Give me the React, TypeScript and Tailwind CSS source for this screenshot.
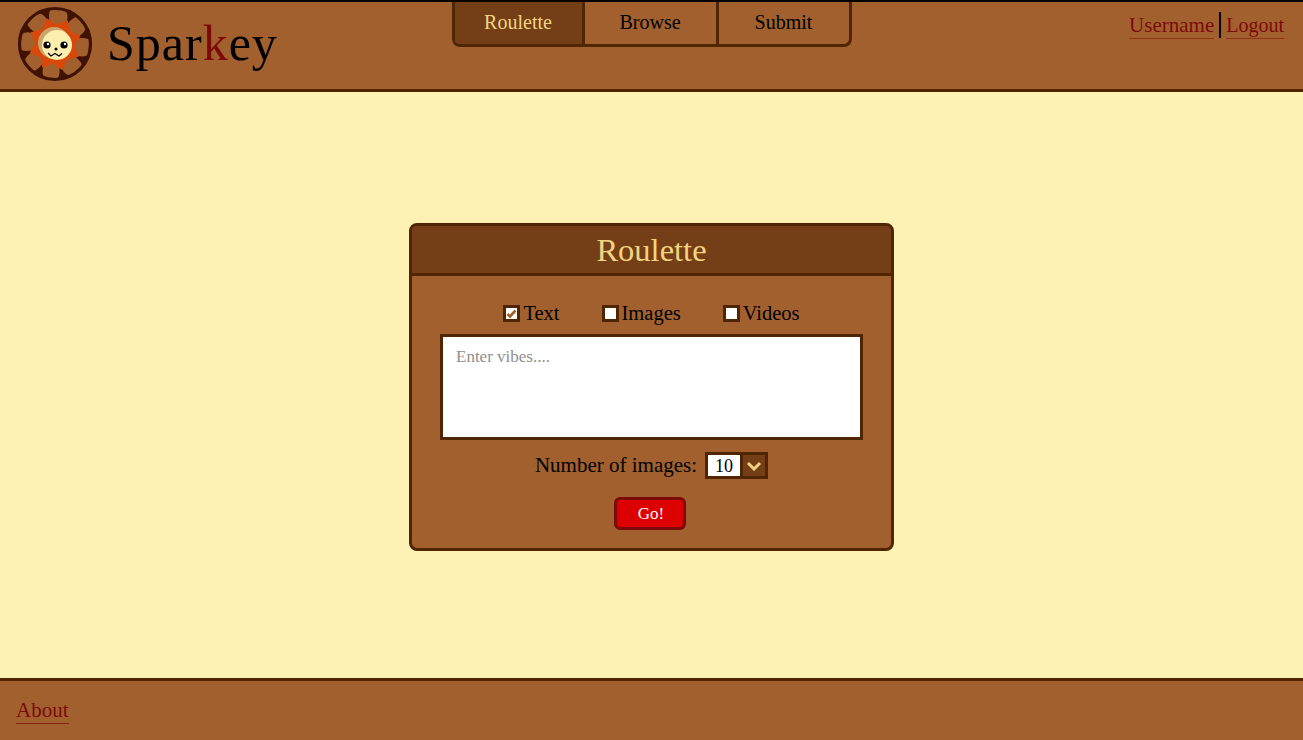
const serif = "font-['Liberation_Serif',serif]";

// ─── Logo ─────────────────────────────────────────────────────────────────────
const pt = (r: number, deg: number) => {
  const a = ((deg - 90) * Math.PI) / 180;
  return `${(38 + r * Math.cos(a)).toFixed(1)} ${(38 + r * Math.sin(a)).toFixed(1)}`;
};

const tips = [-18, 28, 72, 118, 165, 208, 250, 296];

function Logo() {
  const star = tips
    .map((d, i) => {
      const next = tips[(i + 1) % tips.length] + (i === tips.length - 1 ? 360 : 0);
      return `${i === 0 ? "M" : "L"}${pt(27, d)} L${pt(19.5, (d + next) / 2)}`;
    })
    .join(" ");
  return (
    <svg width="76" height="76" viewBox="0 0 76 76" className="shrink-0">
      <circle cx="38" cy="38" r="35.5" fill="#a2602e" stroke="#3f1204" strokeWidth="3.2" />
      {tips.map((d) => (
        <path
          key={d}
          d={`M${pt(20, d)} Q${pt(31, d + 1)} ${pt(35, d - 10)} L${pt(35, d + 11)} Q${pt(31, d + 4)} ${pt(20, d + 4)} Z`}
          fill="#3f1204"
        />
      ))}
      <path d={`${star} Z`} fill="#d9480b" />
      <circle cx="37" cy="37" r="16" fill="#c9a56c" />
      <circle cx="40" cy="39" r="15" fill="#fdeeb0" />
      <circle cx="30" cy="39" r="3.6" fill="#000" />
      <circle cx="31" cy="38" r="1.2" fill="#fff" />
      <circle cx="47" cy="39" r="3.6" fill="#000" />
      <circle cx="48" cy="38" r="1.2" fill="#fff" />
      <circle cx="39" cy="43" r="1.5" fill="#000" />
      <path d="M31 47 L34 50 L38 47.5 L42 50 L45 47.5" fill="none" stroke="#000" strokeWidth="1.3" />
    </svg>
  );
}

// ─── Checkbox row item ────────────────────────────────────────────────────────
function Check({ label, checked }: { label: string; checked?: boolean }) {
  return (
    <label className="flex items-center gap-[3px]">
      <span className="flex h-[17px] w-[17px] items-center justify-center border-[3px] border-[#4f2502] bg-white">
        {checked && (
          <svg width="11" height="11" viewBox="0 0 11 11">
            <path d="M1.5 6 L4 8.5 L9.5 2.5" fill="none" stroke="#a2602e" strokeWidth="2.6" />
          </svg>
        )}
      </span>
      <span className="text-[20.5px] leading-none text-black">{label}</span>
    </label>
  );
}

const tabs = ["Roulette", "Browse", "Submit"];

export default function App() {
  return (
    <div className={`flex h-screen flex-col bg-[#fdf1b3] ${serif}`}>
      {/* Header */}
      <header className="grid h-[92px] grid-cols-[1fr_auto_1fr] border-t-2 border-b-[3px] border-t-black border-b-[#4f2502] bg-[#a2602e]">
        <div className="flex items-start pl-[17px] pt-[4px]">
          <Logo />
          <span className="ml-[14px] mt-[5px] text-[50px] leading-[64px] tracking-[1px] text-black">
            Spar<span className="text-[#7d0a0a]">k</span>ey
          </span>
        </div>

        <nav className="flex h-[45px] w-[400px] overflow-hidden rounded-b-[8px] border-x-[3px] border-b-[3px] border-[#4f2502]">
          {tabs.map((t, i) => (
            <div
              key={t}
              className={
                i === 0
                  ? "flex w-[130px] items-center justify-center border-r-[3px] border-[#4f2502] bg-[#743f16] pb-[2px] text-[20px] text-[#f3d382]"
                  : i === 1
                    ? "flex w-[134px] items-center justify-center border-r-[3px] border-[#4f2502] pb-[2px] text-[20px] text-black"
                    : "flex flex-1 items-center justify-center pb-[2px] text-[20px] text-black"
              }
            >
              {t}
            </div>
          ))}
        </nav>

        <div className="flex items-start justify-end pr-[19px] pt-[10px] leading-[26px] text-[#7d0a0a]">
          <a className="border-b border-[#7d0a0a]/50 text-[21px]">Username</a>
          <span className="mx-[5px] h-[26px] w-[2px] bg-black" />
          <a className="border-b border-[#7d0a0a]/50 text-[20px]">Logout</a>
        </div>
      </header>

      {/* Main */}
      <main className="flex flex-1 items-center justify-center pt-[4px]">
        <section className="w-[485px] overflow-hidden rounded-[8px] border-[3px] border-[#4f2502] bg-[#a2602e]">
          <h1 className="flex h-[50px] items-center justify-center border-b-[3px] border-[#4f2502] bg-[#743f16] pt-[2px] text-[32.5px] text-[#f3d382]">
            Roulette
          </h1>
          <div className="flex flex-col items-center pt-[27px]">
            <div className="flex h-[20px] items-center gap-[42px]">
              <Check label="Text" checked />
              <Check label="Images" />
              <Check label="Videos" />
            </div>
            <textarea
              placeholder="Enter vibes...."
              className="mt-[11px] h-[106px] w-[423px] resize-none border-[3px] border-[#4f2502] bg-white px-[13px] py-[10px] text-[17px] leading-[20px] outline-none placeholder:text-[#8f8f8f]"
            />
            <div className="mt-[12px] flex items-center">
              <span className="text-[21px] leading-none text-black">Number of images:</span>
              <div className="ml-[8px] flex h-[27px] w-[63px] border-[3px] border-[#4f2502]">
                <span className="flex w-[32px] items-center justify-center bg-white text-[18px] leading-none text-black">
                  10
                </span>
                <span className="flex flex-1 items-center justify-center border-l-[3px] border-[#4f2502] bg-[#743f16]">
                  <svg width="16" height="10" viewBox="0 0 16 10">
                    <path d="M2 2 L8 8 L14 2" fill="none" stroke="#f3d382" strokeWidth="3" />
                  </svg>
                </span>
              </div>
            </div>
            <button className="mt-[18px] mb-[18px] mr-[4px] h-[33px] w-[72px] rounded-[6px] border-[3px] border-[#7d0a0a] bg-[#dc0000] pl-[3px] text-[17px] leading-none text-white">
              Go!
            </button>
          </div>
        </section>
      </main>

      {/* Footer */}
      <footer className="h-[62px] border-t-[3px] border-[#4f2502] bg-[#a2602e] pl-[16px] pt-[17px]">
        <a className="inline-block border-b border-[#7d0a0a]/70 text-[21px] leading-[25px] text-[#7d0a0a]">About</a>
      </footer>
    </div>
  );
}
